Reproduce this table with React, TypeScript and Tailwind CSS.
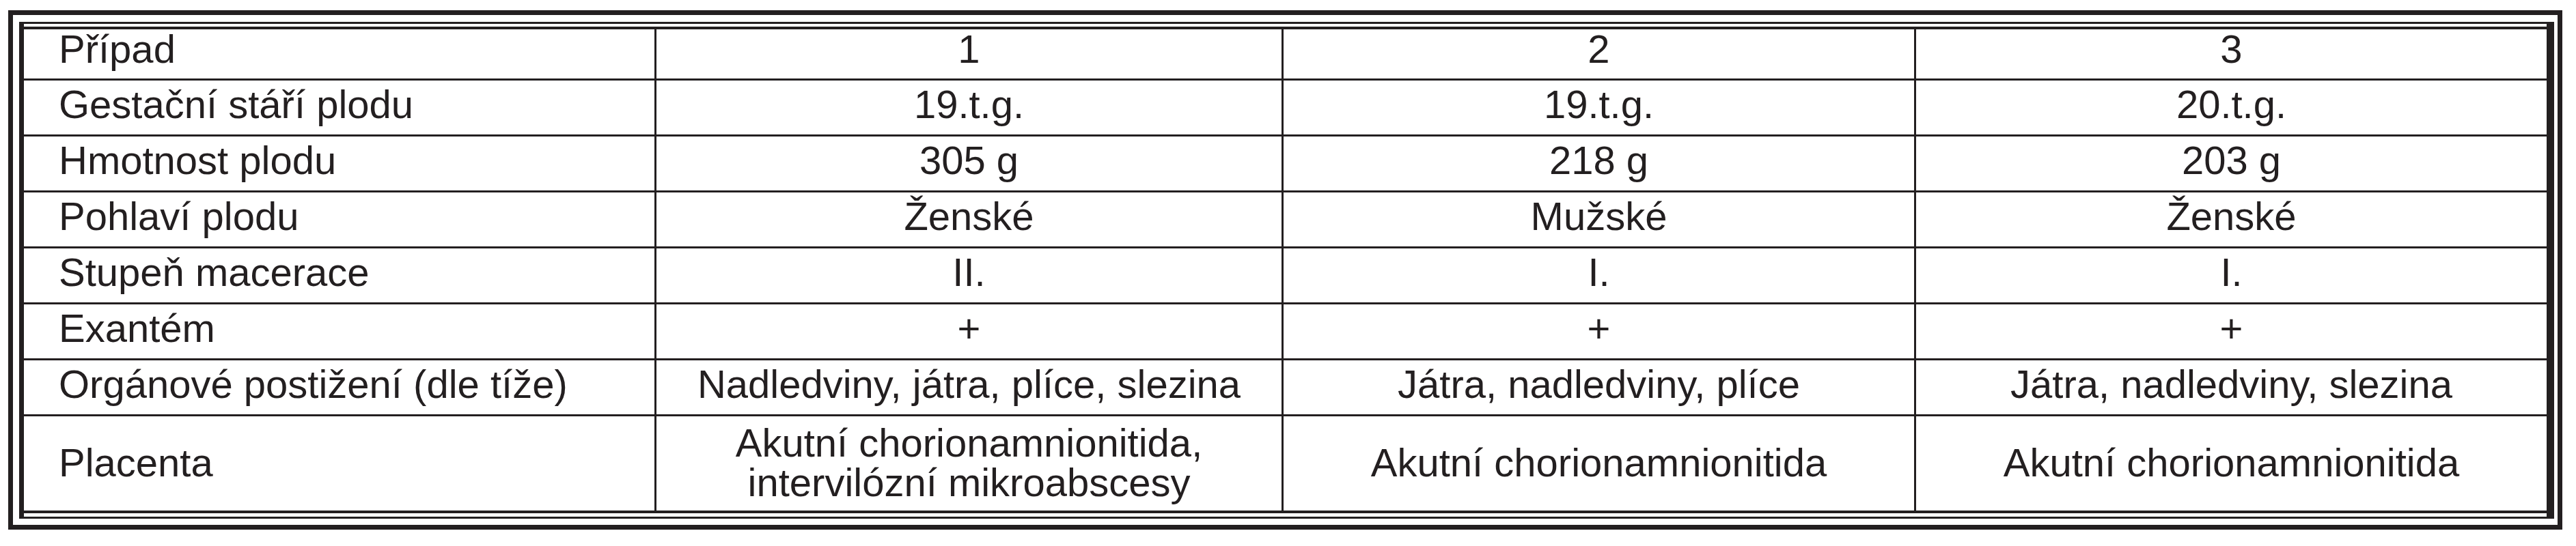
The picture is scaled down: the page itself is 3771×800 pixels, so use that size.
import React from "react";

const rows: { label: string; cells: React.ReactNode[]; h: string; pb: string }[] = [
  { label: "Případ", cells: ["1", "2", "3"], h: "h-[75px]", pb: "pb-[14px]" },
  { label: "Gestační stáří plodu", cells: ["19.t.g.", "19.t.g.", "20.t.g."], h: "h-[82px]", pb: "pb-[10px]" },
  { label: "Hmotnost plodu", cells: ["305 g", "218 g", "203 g"], h: "h-[82px]", pb: "pb-[10px]" },
  { label: "Pohlaví plodu", cells: ["Ženské", "Mužské", "Ženské"], h: "h-[82px]", pb: "pb-[10px]" },
  { label: "Stupeň macerace", cells: ["II.", "I.", "I."], h: "h-[82px]", pb: "pb-[10px]" },
  { label: "Exantém", cells: ["+", "+", "+"], h: "h-[82px]", pb: "pb-[10px]" },
  {
    label: "Orgánové postižení (dle tíže)",
    cells: ["Nadledviny, játra, plíce, slezina", "Játra, nadledviny, plíce", "Játra, nadledviny, slezina"],
    h: "h-[82px]",
    pb: "pb-[10px]",
  },
  {
    label: "Placenta",
    cells: [
      <>
        Akutní chorionamnionitida,
        <br />
        intervilózní mikroabscesy
      </>,
      "Akutní chorionamnionitida",
      "Akutní chorionamnionitida",
    ],
    h: "flex-1",
    pb: "pb-[2px]",
  },
];

export default function App() {
  return (
    <div
      className="w-[3771px] h-[800px] bg-white pt-[15px] pl-[12px] text-[#231f20]"
      style={{ fontFamily: '"Liberation Sans", Arial, sans-serif' }}
    >
      <div className="w-[3739px] h-[761px] border-[7px] border-[#231f20] pl-[9px] pt-[10px] pr-[5px] pb-[9px]">
        <div className="h-full flex flex-col border-l-[7px] border-r-[11px] border-t-[3px] border-b-[3px] border-[#231f20] pt-[4px] pb-[5px]">
          <div className="flex-1 border-t-[4px] border-b-[4px] border-[#231f20] flex flex-col">
            {rows.map((r, i) => (
              <div
                key={i}
                className={`grid grid-cols-[926px_918px_926px_1fr] shrink-0 ${r.h} ${
                  i < rows.length - 1 ? "border-b-[3px] border-[#231f20]" : ""
                }`}
              >
                <div
                  className={`flex items-center pl-[51px] ${r.pb} text-[58px] leading-[58px] border-r-[3px] border-[#231f20] whitespace-nowrap`}
                >
                  {r.label}
                </div>
                {r.cells.map((c, j) => (
                  <div
                    key={j}
                    className={`flex items-center justify-center text-center ${r.pb} text-[58px] leading-[58px] whitespace-nowrap ${
                      j < 2 ? "border-r-[3px] border-[#231f20]" : ""
                    }`}
                  >
                    <div>{c}</div>
                  </div>
                ))}
              </div>
            ))}
          </div>
        </div>
      </div>
    </div>
  );
}
